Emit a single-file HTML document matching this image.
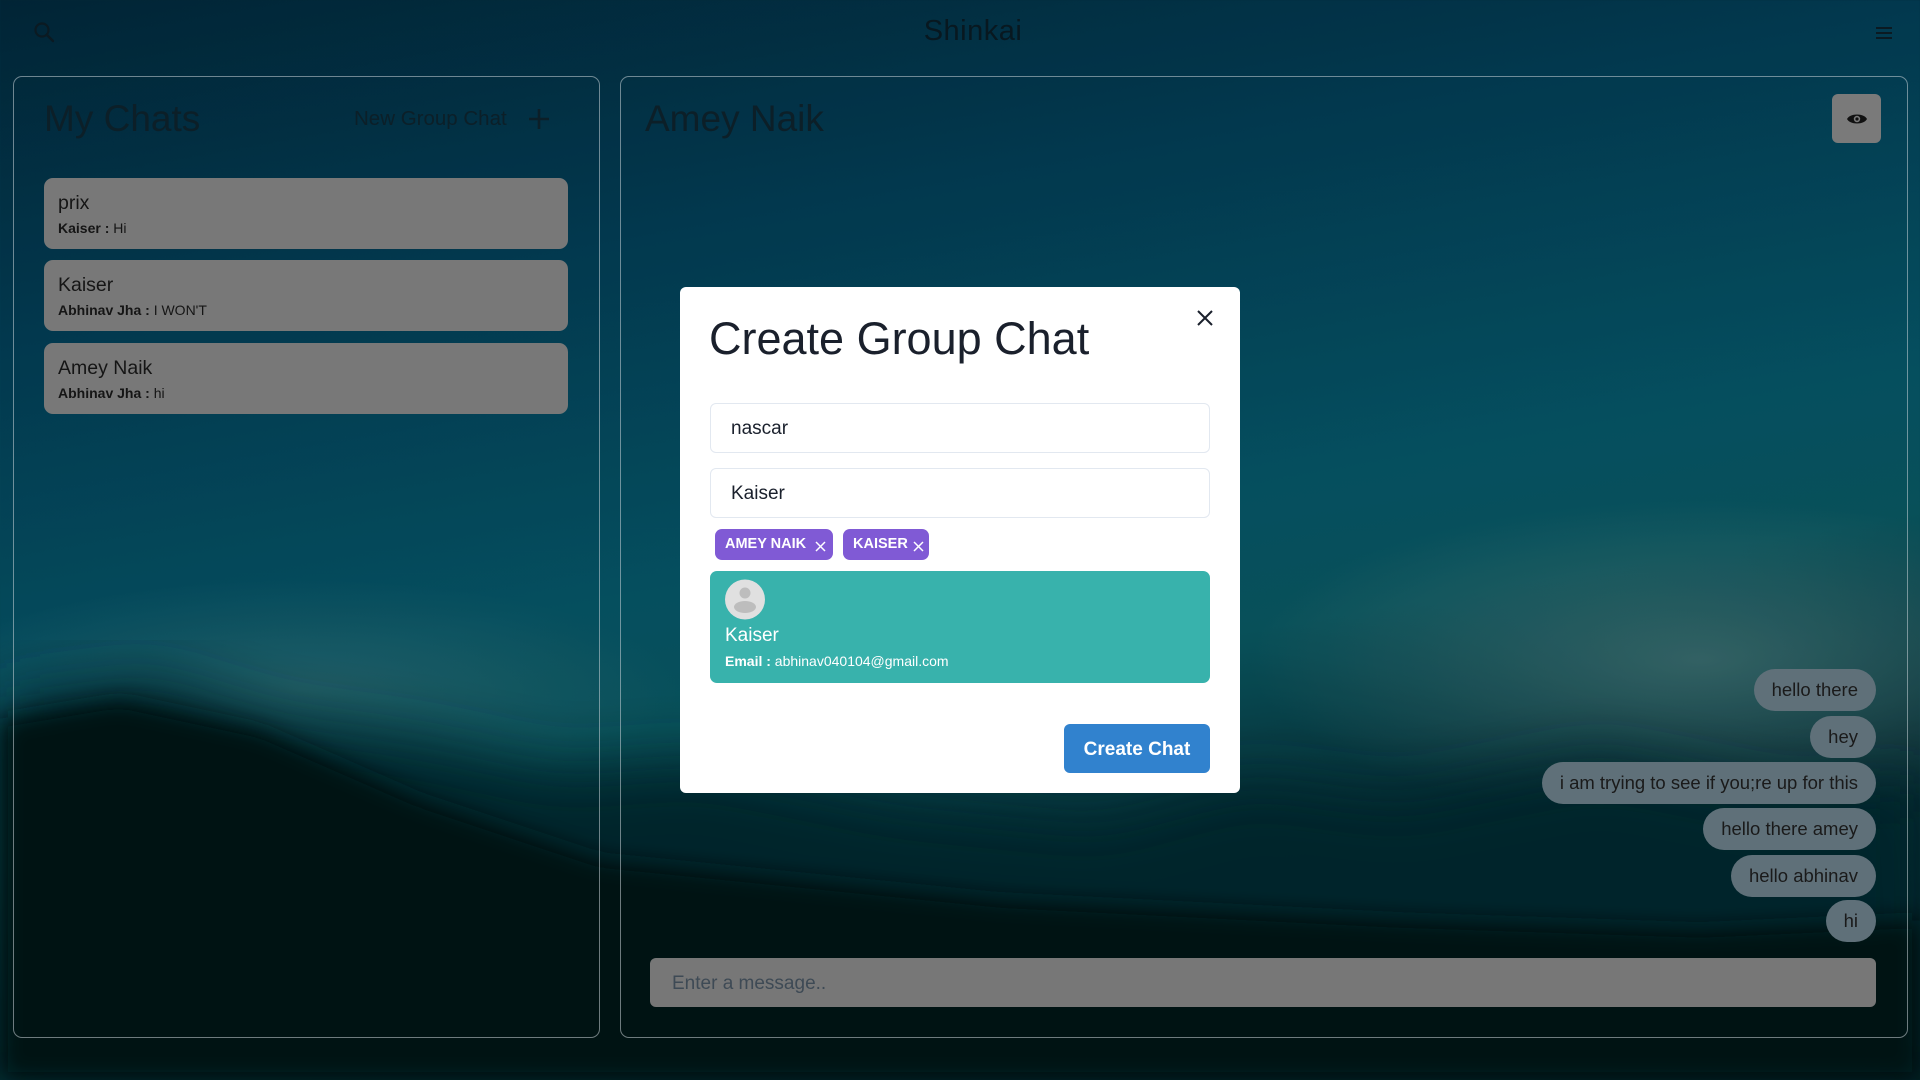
<!DOCTYPE html>
<html><head><meta charset="utf-8"><style>
*{box-sizing:border-box;margin:0;padding:0}
body{width:1920px;height:1080px;overflow:hidden;position:relative;font-family:"Liberation Sans",sans-serif;
background:linear-gradient(170deg,#022a3d 0%,#03415a 25%,#065a6c 50%,#0a5c66 60%,#06323a 75%,#021a20 100%);}
.bg{position:absolute;inset:0}
.abs{position:absolute}
.panel{position:absolute;border:1px solid rgba(200,210,215,.55);border-radius:9px}
.item{position:absolute;left:44px;width:524px;background:#787878;border-radius:9px;padding:0 14px}
.item .t{font-size:19.5px;color:#151515;margin-top:14px}
.item .s{font-size:14px;color:#151515;margin-top:5px}
.bub{position:absolute;right:44px;height:42px;line-height:42px;background:#5f7079;border-radius:21px;padding:0 18px;font-size:18.5px;color:#1a1a1a;white-space:nowrap}
.inp{position:absolute;left:710px;width:500px;height:50px;border:1px solid #e2e8f0;border-radius:6px;font-size:19px;color:#1a202c;padding-left:20px;line-height:50px}
.tag{position:absolute;top:529px;height:31px;background:#805ad5;color:#fff;border-radius:7px;font-weight:bold;font-size:14.5px;line-height:31px;padding-left:10px}
</style></head><body>
<svg class="bg" width="1920" height="1080" viewBox="0 0 1920 1080">
<defs>
<filter id="b"><feGaussianBlur stdDeviation="30"/></filter>
<filter id="b2"><feGaussianBlur stdDeviation="12"/></filter>
<radialGradient id="h" cx="0.5" cy="0.5" r="0.5"><stop offset="0" stop-color="#4f8080" stop-opacity=".7"/><stop offset="1" stop-color="#4f8080" stop-opacity="0"/></radialGradient>
</defs>
<ellipse cx="1700" cy="660" rx="450" ry="160" fill="url(#h)"/>
<ellipse cx="300" cy="690" rx="380" ry="110" fill="url(#h)" opacity=".6"/>
<path filter="url(#b)" fill="#052c33" d="M0 700 L150 680 L280 720 L420 740 L560 770 L700 760 L900 800 L1100 820 L1250 780 L1400 800 L1600 760 L1800 800 L1920 780 L1920 1080 L0 1080Z"/>
<path filter="url(#b2)" fill="#021519" d="M0 720 L120 700 L260 730 L420 800 L600 860 L800 880 L1000 900 L1200 910 L1400 920 L1700 930 L1920 920 L1920 1080 L0 1080Z"/>
<rect x="0" y="0" width="1920" height="1080" fill="#000" opacity=".12"/>
</svg>

<!-- header -->
<svg class="abs" style="left:32px;top:20px" width="24" height="24" viewBox="0 0 24 24"><circle cx="10" cy="10" r="6.5" fill="none" stroke="#0b1a22" stroke-width="2.2"/><path d="M15 15l6 6" stroke="#0b1a22" stroke-width="2.4" stroke-linecap="round"/></svg>
<div class="abs" style="left:0;width:1946px;top:15px;text-align:center;font-size:29px;color:#081820;letter-spacing:.5px">Shinkai</div>
<svg class="abs" style="left:1875px;top:25px" width="18" height="16" viewBox="0 0 18 16"><path d="M1 3h16M1 8h16M1 13h16" stroke="#0b1a22" stroke-width="2"/></svg>

<!-- left panel -->
<div class="panel" style="left:13px;top:76px;width:587px;height:962px"></div>
<div class="abs" style="left:44px;top:98px;font-size:37px;color:#0c1f28;font-weight:300">My Chats</div>
<div class="abs" style="left:354px;top:107px;font-size:20.5px;color:#0c1f28">New Group Chat</div>
<svg class="abs" style="left:527px;top:107px" width="24" height="24" viewBox="0 0 24 24"><path d="M12 2v20M2 12h20" stroke="#0c1f28" stroke-width="2.6"/></svg>
<div class="item" style="top:178px;height:71px"><div class="t">prix</div><div class="s"><b>Kaiser : </b>Hi</div></div>
<div class="item" style="top:260px;height:71px"><div class="t">Kaiser</div><div class="s"><b>Abhinav Jha : </b>I WON'T</div></div>
<div class="item" style="top:343px;height:71px"><div class="t">Amey Naik</div><div class="s"><b>Abhinav Jha : </b>hi</div></div>

<!-- right panel -->
<div class="panel" style="left:620px;top:76px;width:1288px;height:962px"></div>
<div class="abs" style="left:645px;top:98px;font-size:37px;color:#0c1f28;font-weight:300">Amey Naik</div>
<div class="abs" style="left:1832px;top:94px;width:49px;height:49px;background:#7a7a7a;border-radius:6px"></div>
<svg class="abs" style="left:1846px;top:111px" width="22" height="16" viewBox="0 0 22 16"><path d="M1 8C4 2 18 2 21 8C18 14 4 14 1 8Z" fill="#111"/><circle cx="11" cy="8" r="3.2" fill="#7a7a7a"/><circle cx="11" cy="8" r="1.6" fill="#111"/></svg>

<div class="bub" style="top:669px">hello there</div>
<div class="bub" style="top:716px">hey</div>
<div class="bub" style="top:762px">i am trying to see if you;re up for this</div>
<div class="bub" style="top:808px">hello there amey</div>
<div class="bub" style="top:855px">hello abhinav</div>
<div class="bub" style="top:900px">hi</div>
<div class="abs" style="left:650px;top:958px;width:1226px;height:49px;background:#777;border-radius:6px;font-size:19px;color:#3e4a55;padding-left:22px;line-height:51px">Enter a message..</div>

<!-- modal -->
<div class="abs" style="left:680px;top:287px;width:560px;height:506px;background:#fff;border-radius:6px"></div>
<div class="abs" style="left:709px;top:313px;font-size:45px;color:#1a202c">Create Group Chat</div>
<svg class="abs" style="left:1196px;top:309px" width="18" height="18" viewBox="0 0 18 18"><path d="M2 2l14 14M16 2L2 16" stroke="#1a202c" stroke-width="2"/></svg>
<div class="inp" style="top:403px">nascar</div>
<div class="inp" style="top:468px">Kaiser</div>
<div class="tag" style="left:715px;width:118px">AMEY NAIK<svg style="position:absolute;left:100px;top:12px" width="11" height="11" viewBox="0 0 11 11"><path d="M1 1l9 9M10 1L1 10" stroke="#fff" stroke-width="1.5"/></svg></div>
<div class="tag" style="left:843px;width:86px">KAISER<svg style="position:absolute;left:70px;top:12px" width="11" height="11" viewBox="0 0 11 11"><path d="M1 1l9 9M10 1L1 10" stroke="#fff" stroke-width="1.5"/></svg></div>
<div class="abs" style="left:710px;top:571px;width:500px;height:112px;background:#38b2ac;border-radius:7px"></div>
<svg class="abs" style="left:725px;top:579px" width="40" height="41" viewBox="0 0 40 41"><circle cx="20" cy="20.5" r="20" fill="#e0e0e0"/><circle cx="20" cy="14" r="5.5" fill="#bdbdbd"/><ellipse cx="20" cy="28" rx="11" ry="6" fill="#bdbdbd"/></svg>
<div class="abs" style="left:725px;top:625px;font-size:19px;color:#fff">Kaiser</div>
<div class="abs" style="left:725px;top:653px;font-size:14px;color:#fff"><b>Email : </b>abhinav040104@gmail.com</div>
<div class="abs" style="left:1064px;top:724px;width:146px;height:49px;background:#3182ce;border-radius:6px;color:#fff;font-weight:bold;font-size:19px;text-align:center;line-height:51px">Create Chat</div>
</body></html>
